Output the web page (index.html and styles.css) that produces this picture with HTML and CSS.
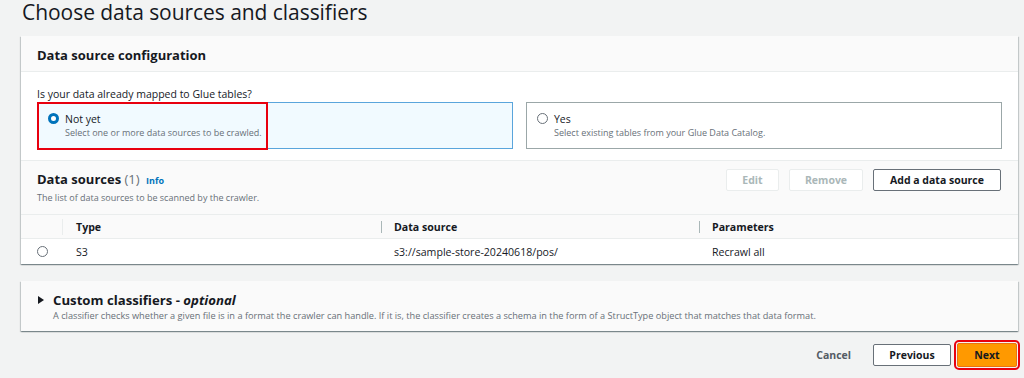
FILE: index.html
```html
<!DOCTYPE html>
<html>
<head>
<meta charset="utf-8">
<link rel="stylesheet" href="styles.css">
</head>
<body>
<div class="page">
  <h1 class="title">Choose data sources and classifiers</h1>

  <section class="card">
    <div class="card-header">Data source configuration</div>
    <div class="card-body">
      <div class="question">Is your data already mapped to Glue tables?</div>
      <div class="tiles">
        <div class="tile selected">
          <span class="radio on"></span>
          <div class="tile-text">
            <div class="tile-label">Not yet</div>
            <div class="tile-desc">Select one or more data sources to be crawled.</div>
          </div>
          <div class="annot"></div>
        </div>
        <div class="tile">
          <span class="radio"></span>
          <div class="tile-text">
            <div class="tile-label">Yes</div>
            <div class="tile-desc">Select existing tables from your Glue Data Catalog.</div>
          </div>
        </div>
      </div>
    </div>

    <div class="ds-head">
      <div class="ds-titles">
        <div class="ds-title">Data sources <span class="count">(1)</span> <span class="info">Info</span></div>
        <div class="ds-desc">The list of data sources to be scanned by the crawler.</div>
      </div>
      <div class="ds-actions">
        <button class="btn disabled">Edit</button>
        <button class="btn disabled">Remove</button>
        <button class="btn normal">Add a data source</button>
      </div>
    </div>

    <div class="table">
      <div class="row head">
        <div class="cell sel"></div>
        <div class="cell">Type</div>
        <div class="cell div">Data source</div>
        <div class="cell div">Parameters</div>
      </div>
      <div class="row">
        <div class="cell sel"><span class="radio"></span></div>
        <div class="cell">S3</div>
        <div class="cell">s3://sample-store-20240618/pos/</div>
        <div class="cell">Recrawl all</div>
      </div>
    </div>
  </section>

  <section class="card exp">
    <div class="exp-head">
      <span class="caret"></span>
      <div>
        <div class="exp-title">Custom classifiers - <em>optional</em></div>
        <div class="exp-desc">A classifier checks whether a given file is in a format the crawler can handle. If it is, the classifier creates a schema in the form of a StructType object that matches that data format.</div>
      </div>
    </div>
  </section>

  <div class="footer">
    <button class="link">Cancel</button>
    <button class="btn normal prev">Previous</button>
    <button class="btn primary">Next</button>
  </div>
</div>
</body>
</html>
```

FILE: styles.css
```css
* { box-sizing: border-box; }
html, body { margin: 0; padding: 0; }
body {
  background: #f2f3f3;
  font-family: "Open Sans", "Noto Sans", sans-serif;
  color: #16191f;
  width: 1024px;
  height: 378px;
  overflow: hidden;
}
.page { padding: 0 6px 0 21px; }
.title {
  margin: -1px 0 0 1px;
  font-size: 21px;
  line-height: 26px;
  font-weight: 400;
  letter-spacing: -0.05px;
}
.card {
  margin-top: 11px;
  background: #fff;
  box-shadow: 0 1px 1px 0 rgba(0,28,36,.3), 1px 1px 1px 0 rgba(0,28,36,.15), -1px 1px 1px 0 rgba(0,28,36,.15);
}
.card-header {
  height: 36px;
  background: #fafafa;
  border-bottom: 1px solid #eaeded;
  padding: 10px 16px 0;
  font-size: 13px;
  font-weight: 700;
  line-height: 18px;
}
.card-body { padding: 15px 16px 11px; }
.question { font-size: 10.5px; line-height: 14px; color: #16191f; }
.tiles {
  margin-top: 1px;
  display: grid;
  grid-template-columns: 1fr 1fr;
  gap: 13px;
}
.tile {
  position: relative;
  height: 47px;
  border: 1px solid #9ba7a8;
  display: flex;
  padding: 9px 10px;
  gap: 6px;
  background: #fff;
}
.tile.selected { background: #f1faff; border-color: #5aa5dc; }
.radio {
  display: inline-block;
  width: 11px;
  height: 11px;
  border-radius: 50%;
  border: 1.3px solid #687078;
  background: #fff;
  flex: none;
  margin-top: 1px;
}
.radio.on { border: 3px solid #0073bb; }
.tile-label { font-size: 10.5px; line-height: 14px; }
.tile-desc { font-size: 9px; line-height: 13px; color: #687078; }
.annot {
  position: absolute;
  left: -1px;
  top: -1px;
  width: 231px;
  height: 48px;
  border: 2px solid #e8000f;
}
.ds-head {
  background: #fafafa;
  border-top: 1px solid #eaeded;
  height: 54px;
  display: flex;
  justify-content: space-between;
  padding: 9px 17px 0 16px;
}
.ds-title { font-size: 13px; font-weight: 700; line-height: 18px; }
.count { font-weight: 400; color: #687078; }
.info { font-size: 9px; color: #0073bb; margin-left: 3px; }
.ds-desc { font-size: 9px; line-height: 13px; color: #687078; margin-top: 1px; }
.ds-actions { display: flex; gap: 10px; align-items: flex-start; }
.btn {
  font-family: inherit;
  height: 22px;
  padding: 0 12px;
  font-size: 10.5px;
  font-weight: 700;
  border-radius: 2px;
  background: #fff;
  line-height: 18px;
}
.ds-actions .btn { margin-top: -1px; }
.btn.disabled { border: 1px solid #eaeded; color: #aab7b8; }
.ds-actions .btn:nth-child(1) { width: 53px; }
.ds-actions .btn:nth-child(2) { width: 74px; }
.ds-actions .btn:nth-child(3) { width: 128px; }
.btn.normal { border: 1px solid #687078; color: #16191f; }
.table { font-size: 10.6px; }
.row {
  display: grid;
  grid-template-columns: 42px 318px 318px 1fr;
  height: 25px;
  align-items: center;
}
.row.head { background: #fafafa; border-top: 1px solid #eaeded; border-bottom: 1px solid #eaeded; font-weight: 700; }
.cell { padding-left: 13px; position: relative; line-height: 14px; }
.cell.sel { padding-left: 16px; height: 100%; display: flex; align-items: center; }
.row.head .cell.sel { border-right: 1px solid #eaeded; height: 16px; }
.cell.div::before {
  content: "";
  position: absolute;
  left: 0;
  top: 1px;
  width: 1px;
  height: 12px;
  background: #aab7b8;
}
.row .cell.sel .radio { margin-top: 0; }
.card.exp { margin-top: 17px; background: #fafafa; height: 50px; }
.exp-head { display: flex; padding: 10px 16px 0 17px; gap: 9px; }
.caret {
  width: 0; height: 0;
  border-left: 6px solid #16191f;
  border-top: 4px solid transparent;
  border-bottom: 4px solid transparent;
  margin-top: 5px;
}
.exp-title { font-size: 13.2px; font-weight: 700; line-height: 18px; }
.exp-title em { font-style: italic; }
.exp-desc { font-size: 9.2px; line-height: 13px; color: #687078; margin-top: 0; }
.footer {
  display: flex;
  justify-content: flex-end;
  align-items: center;
  gap: 4px;
  margin-top: 12px;
  padding-right: 1px;
}
.link {
  font-family: inherit;
  background: none;
  border: 0;
  font-size: 10.5px;
  font-weight: 700;
  color: #545b64;
  margin-right: 12px;
}
.prev { width: 78px; color: #545b64; border-color: #545b64; }
.btn.primary {
  width: 60px;
  margin-left: 2px;
  border: 1px solid #ec7211;
  background: #ff9900;
  color: #16191f;
  height: 24px;
  outline: 2px solid #e8000f;
  outline-offset: 1px;
}
```
